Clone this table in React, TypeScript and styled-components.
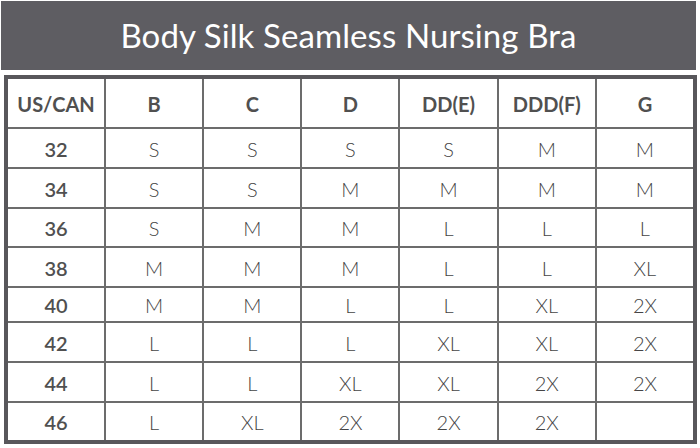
import styled, { createGlobalStyle } from 'styled-components';

const GlobalStyle = createGlobalStyle`
  html, body {
    margin: 0;
    padding: 0;
    background: #ffffff;
  }
  body {
    font-family: Lato, "Noto Sans", sans-serif;
  }
`;

const Page = styled.div`
  width: 700px;
  height: 448px;
  padding: 1px 0 0 1px;
  box-sizing: border-box;
  display: flex;
  flex-direction: column;
  gap: 5px;
  overflow: hidden;
`;

const Banner = styled.div`
  width: 695px;
  height: 69px;
  background: #5e5d62;
  display: flex;
  align-items: center;
  justify-content: center;
  color: #ffffff;
  font-family: Lato, sans-serif;
  font-weight: 400;
  font-size: 33px;
  letter-spacing: 0.1px;
  padding-bottom: 2px;
  box-sizing: border-box;
`;

const Table = styled.div`
  margin-left: 3px;
  width: 693px;
  border: 4px solid #58575b;
  box-sizing: border-box;
  display: grid;
  grid-template-columns: 96px repeat(6, 1fr);
  grid-template-rows: 48px 38px 38px 37px 38px 33px 38px 38px 37px;
  gap: 2px;
  background: #6c6c6c;
`;

const Cell = styled.div<{ $head?: boolean; $strong?: boolean }>`
  background: #ffffff;
  display: flex;
  align-items: center;
  justify-content: center;
  color: ${p => (p.$head ? '#505050' : p.$strong ? '#505050' : '#444444')};
  font-family: Lato, sans-serif;
  font-size: ${p => (p.$head ? '20px' : '20px')};
  font-weight: ${p => (p.$head ? 700 : p.$strong ? 600 : 300)};
  padding-top: 1px;
`;

const cups = ['B', 'C', 'D', 'DD(E)', 'DDD(F)', 'G'];

const rows: [string, string[]][] = [
  ['32', ['S', 'S', 'S', 'S', 'M', 'M']],
  ['34', ['S', 'S', 'M', 'M', 'M', 'M']],
  ['36', ['S', 'M', 'M', 'L', 'L', 'L']],
  ['38', ['M', 'M', 'M', 'L', 'L', 'XL']],
  ['40', ['M', 'M', 'L', 'L', 'XL', '2X']],
  ['42', ['L', 'L', 'L', 'XL', 'XL', '2X']],
  ['44', ['L', 'L', 'XL', 'XL', '2X', '2X']],
  ['46', ['L', 'XL', '2X', '2X', '2X', '']],
];

const App = () => {
  return (
    <>
      <GlobalStyle />
      <Page>
        <Banner>Body Silk Seamless Nursing Bra</Banner>
        <Table>
          <Cell $head>US/CAN</Cell>
          {cups.map(c => (
            <Cell key={c} $head>{c}</Cell>
          ))}
          {rows.map(([band, sizes]) => [
            <Cell key={band} $strong>{band}</Cell>,
            ...sizes.map((s, i) => (
              <Cell key={band + '-' + i}>{s}</Cell>
            )),
          ])}
        </Table>
      </Page>
    </>
  );
};

export default App;
